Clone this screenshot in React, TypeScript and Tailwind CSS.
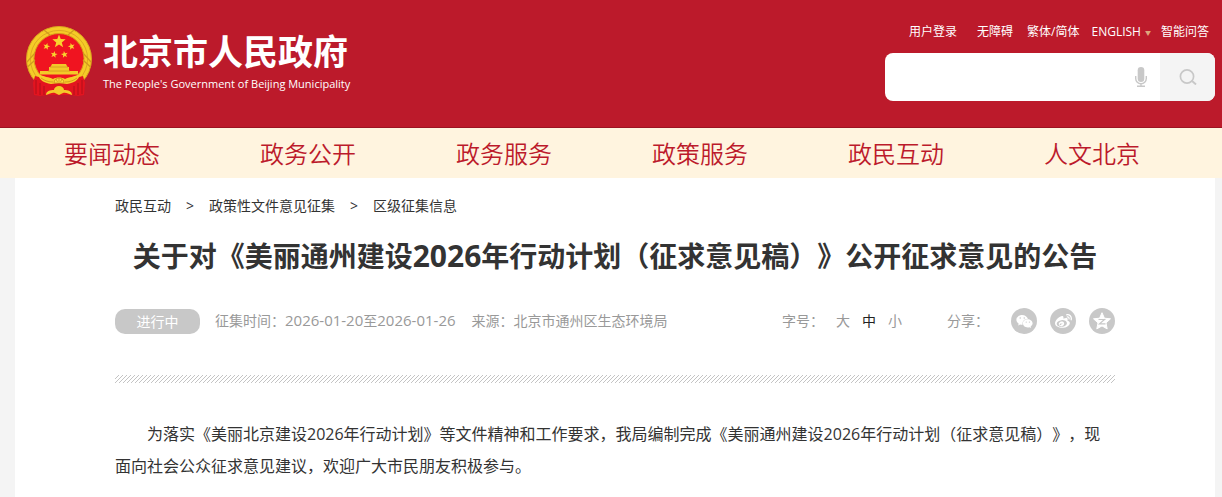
import { FaWeibo, FaWeixin } from "react-icons/fa";

const topLinks = [
  { label: "用户登录", className: "" },
  { label: "无障碍", className: "ml-5" },
  { label: "繁体/简体", className: "ml-[14px]" },
  { label: "ENGLISH", className: "ml-3", arrow: true },
  { label: "智能问答", className: "ml-[10px]" },
];

const navItems = ["要闻动态", "政务公开", "政务服务", "政策服务", "政民互动", "人文北京"];

const crumbs = ["政民互动", "政策性文件意见征集", "区级征集信息"];

function Star({ x, y, r, rotate = 0 }: { x: number; y: number; r: number; rotate?: number }) {
  const points = Array.from({ length: 10 }, (_, i) => {
    const angle = ((i * 36 - 90 + rotate) * Math.PI) / 180;
    const radius = i % 2 === 0 ? r : r * 0.42;
    return `${x + radius * Math.cos(angle)},${y + radius * Math.sin(angle)}`;
  }).join(" ");
  return <polygon points={points} fill="#f9d22e" />;
}

function Emblem() {
  return (
    <svg viewBox="0 0 66 71" className="h-[71px] w-[66px] shrink-0" aria-hidden="true">
      {/* wheat ring */}
      <circle cx="33" cy="33" r="32.5" fill="#f5cb27" stroke="#d9a320" />
      <circle cx="33" cy="33" r="28.6" fill="none" stroke="#dfa922" strokeWidth="1" />
      <circle cx="33" cy="32.500" r="25" fill="#f01420" stroke="#d9981c" strokeWidth="1" />
      <path d="M1 36 9 27M1.500 41 9 34M65 36 57 27M64.500 41 57 34M18 4l6 5M48 4l-6 5" stroke="#d09a1e" strokeWidth="1.200" />
      <Star x={33} y={15.5} r={7} />
      <Star x={20.5} y={20.5} r={3.6} rotate={15} />
      <Star x={45.500} y={20.5} r={3.6} rotate={-15} />
      <Star x={28} y={28.5} r={3.6} rotate={10} />
      <Star x={38.5} y={28.5} r={3.6} rotate={-10} />
      {/* gate */}
      <path d="M26 38h14l1.500 3H43v4h9v3.500H14V45h9v-4h1.500z" fill="#f3c928" />
      <path d="M24 41h18M22 45h22" stroke="#d09a1e" strokeWidth=".8" />
      {/* red drapery */}
      <path d="M9 50c8 3 40 3 48 0l2 7-1 12-6 1-7-1H21l-7 1-6-1-1-12z" fill="#e3141f" />
      <path d="M10 54v14M14 57v12M56 54v14M52 57v12M18 60v9M48 60v9" stroke="#b00f1b" strokeWidth="1" />
      <path d="M12 48c6 3 11 3 15 5 3-2 9-2 12 0 4-2 9-2 15-5-1 6-6 9-13 10l-8-1-8 1c-7-1-12-4-13-10z" fill="#f6cd2b" />
      <path d="M15 52c4 3 8 4 12 4M51 52c-4 3-8 4-12 4" fill="none" stroke="#d09a1e" strokeWidth=".9" />
      <path d="M28 57a5 5 0 0 1 10 0z" fill="#fbdc3c" stroke="#c98d18" strokeWidth=".8" />
      <path d="m30 53 1.500 3M33 52v4M36 53l-1.500 3" stroke="#c98d18" strokeWidth=".7" />
      <path d="M20 69c0-4 4-5 8-5a5 4 0 0 1 10 0c4 0 8 1 8 5-4-1-6-3-9-2l-4 2-4-2c-3-1-5 1-9 2z" fill="#f4c92a" />
    </svg>
  );
}

function MicIcon() {
  return (
    <svg viewBox="0 0 12 20" className="h-5 w-3" aria-hidden="true">
      <rect x="2.7" y="0" width="6.600" height="15" rx="3.300" fill="#c8c8c8" />
      <path d="M.7 9v2.500a5.300 5.300 0 0 0 10.600 0V9M6 17v2M2 19.300h8" fill="none" stroke="#c8c8c8" strokeWidth="1.400" />
    </svg>
  );
}

function SearchIcon() {
  return (
    <svg viewBox="0 0 18 16" className="h-4 w-[18px]" aria-hidden="true">
      <circle cx="8" cy="7.500" r="6.600" fill="none" stroke="#c8c8c8" strokeWidth="1.700" />
      <path d="m12.500 11.500 4.500 4" stroke="#c8c8c8" strokeWidth="1.900" />
    </svg>
  );
}

function QzoneIcon() {
  return (
    <svg viewBox="0 0 18 18" className="size-[18px]" aria-hidden="true">
      <path
        d="m9 .7 2.400 5.500 6.100.6-4.500 4.100 1.200 6L9 13.900l-5.200 3 1.200-6L.5 6.800l6.100-.6z"
        fill="#fff"
        stroke="#fff"
        strokeLinejoin="round"
      />
      <path d="M5.500 7.500h6L6.500 11.800h6" fill="none" stroke="#c8c8c8" strokeWidth="1.200" />
    </svg>
  );
}

function HatchedRule() {
  return (
    <svg className="mt-10 block h-2 w-full" aria-hidden="true">
      <defs>
        <pattern id="hatch" width="4" height="4" patternUnits="userSpaceOnUse">
          <path d="M-1 1 1-1M0 4l4-4M3 5l2-2" stroke="#c4c4c4" strokeWidth="1" />
        </pattern>
      </defs>
      <rect width="100%" height="8" fill="url(#hatch)" />
    </svg>
  );
}

function Header() {
  return (
    <header className="flex h-32 justify-between border-b border-[#9c1322] bg-[#bc1a2b] pr-[7px] pl-[26px]">
      <a href="#" className="flex items-start gap-[11px] pt-[26px] text-white">
        <Emblem />
        <span className="flex flex-col pt-[6px]">
          <span className="text-[35px] leading-10 font-bold">北京市人民政府</span>
          <span className="text-[11px] leading-6">The People's Government of Beijing Municipality</span>
        </span>
      </a>
      <div className="flex w-[330px] flex-col pt-[22px]">
        <div className="flex justify-end pr-[6px] text-xs leading-5 whitespace-nowrap text-white">
          {topLinks.map(({ label, className, arrow }) => (
            <a key={label} href="#" className={className}>
              {label}
              {arrow && <span className="ml-1 inline-block align-middle text-[6px] leading-none text-[#dfa77c]">▼</span>}
            </a>
          ))}
        </div>
        <form className="mt-[11px] flex h-12 shrink-0 overflow-hidden rounded-lg bg-white">
          <input type="text" aria-label="搜索" className="min-w-0 flex-1 px-4 text-base text-[#333] outline-none" />
          <button type="button" aria-label="语音输入" className="pr-[13px]">
            <MicIcon />
          </button>
          <button type="submit" aria-label="搜索" className="flex w-[55px] items-center justify-center bg-[#f4f4f4]">
            <SearchIcon />
          </button>
        </form>
      </div>
    </header>
  );
}

function MainNav() {
  return (
    <nav className="flex h-[50px] bg-[#fff4df] pr-8 pl-[14px]">
      {navItems.map((item) => (
        <a key={item} href="#" className="flex-1 pt-px text-center text-2xl leading-[50px] font-[350] text-[#bc1a2b]">
          {item}
        </a>
      ))}
    </nav>
  );
}

function Meta() {
  const share = "flex size-[26px] items-center justify-center rounded-full bg-[#c8c8c8] text-white";
  return (
    <div className="mt-[33px] flex h-7 items-center text-sm text-[#999]">
      <span className="h-[25px] w-[85px] rounded-[10px] bg-[#c8c8c8] text-center leading-[25px] text-white">进行中</span>
      <span className="ml-[15px]">
        征集时间：<span className="text-[15px]">2026-01-20</span>至<span className="text-[15px]">2026-01-26</span>
      </span>
      <span className="ml-4">来源：北京市通州区生态环境局</span>
      <div className="ml-auto flex items-center">
        <span>字号：</span>
        <div className="ml-3 flex gap-3">
          <button type="button">大</button>
          <button type="button" className="text-[#222]">中</button>
          <button type="button">小</button>
        </div>
        <span className="ml-[45px]">分享：</span>
        <div className="ml-[22px] flex gap-[13px]">
          <button type="button" aria-label="微信" className={share}>
            <FaWeixin className="size-[17px]" />
          </button>
          <button type="button" aria-label="微博" className={share}>
            <FaWeibo className="size-[17px]" />
          </button>
          <button type="button" aria-label="QQ空间" className={share}>
            <QzoneIcon />
          </button>
        </div>
      </div>
    </div>
  );
}

export default function App() {
  return (
    <div className="min-h-screen bg-[#f4f4f4] font-['Open_Sans','Noto_Sans_CJK_SC',sans-serif] text-[#333] [text-spacing-trim:space-all]" lang="zh-CN">
      <Header />
      <MainNav />
      <main className="mr-[7px] ml-[15px] min-h-[calc(100vh-178px)] bg-white px-[100px] pt-[18px]">
        <nav className="flex text-sm leading-5">
          {crumbs.map((crumb, i) => (
            <span key={crumb}>
              {i > 0 && <span className="mx-[15px]">&gt;</span>}
              <a href="#">{crumb}</a>
            </span>
          ))}
        </nav>
        <h1 className="mt-[22px] text-center text-[28px] leading-9 font-bold">
          关于对《美丽通州建设<span className="text-[30px] leading-none">2026</span>年行动计划（征求意见稿）》公开征求意见的公告
        </h1>
        <Meta />
        <HatchedRule />
        <article className="mt-[35px] text-base leading-8">
          <p className="indent-8">
            为落实《美丽北京建设2026年行动计划》等文件精神和工作要求，我局编制完成《美丽通州建设2026年行动计划（征求意见稿）》，现面向社会公众征求意见建议，欢迎广大市民朋友积极参与。
          </p>
        </article>
      </main>
    </div>
  );
}
